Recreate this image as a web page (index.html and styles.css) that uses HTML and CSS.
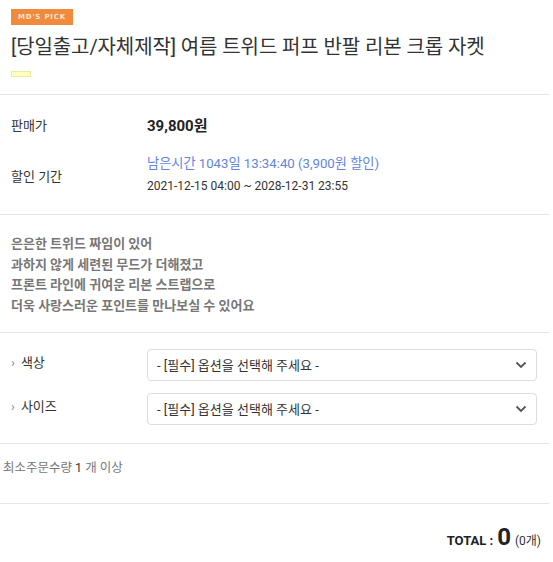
FILE: index.html
```html
<!DOCTYPE html>
<html lang="ko">
<head>
<meta charset="utf-8">
<link rel="stylesheet" href="styles.css">
</head>
<body>
<div class="page">
  <section class="head">
    <span class="badge">MD'S PICK</span>
    <h1 class="title">[당일출고/자체제작] 여름 트위드 퍼프 반팔 리본 크롭 자켓</h1>
    <span class="swatch"></span>
  </section>
  <section class="info">
    <div class="row price-row">
      <div class="label">판매가</div>
      <div class="value price">39,800원</div>
    </div>
    <div class="row sale-row">
      <div class="label">할인 기간</div>
      <div class="value">
        <div class="remain">남은시간 1043일 13:34:40 (3,900원 할인)</div>
        <div class="period">2021-12-15 04:00 ~ 2028-12-31 23:55</div>
      </div>
    </div>
  </section>
  <section class="desc">
    <p>은은한 트위드 짜임이 있어</p>
    <p>과하지 않게 세련된 무드가 더해졌고</p>
    <p>프론트 라인에 귀여운 리본 스트랩으로</p>
    <p>더욱 사랑스러운 포인트를 만나보실 수 있어요</p>
  </section>
  <section class="options">
    <div class="opt">
      <div class="opt-label"><span class="chev">›</span>색상</div>
      <div class="select">
        <span>- [필수] 옵션을 선택해 주세요 -</span>
        <svg class="arrow" width="12" height="8" viewBox="0 0 12 8"><path d="M1.5 1.5 L6 6 L10.5 1.5" fill="none" stroke="#555" stroke-width="1.8"/></svg>
      </div>
    </div>
    <div class="opt">
      <div class="opt-label"><span class="chev">›</span>사이즈</div>
      <div class="select">
        <span>- [필수] 옵션을 선택해 주세요 -</span>
        <svg class="arrow" width="12" height="8" viewBox="0 0 12 8"><path d="M1.5 1.5 L6 6 L10.5 1.5" fill="none" stroke="#555" stroke-width="1.8"/></svg>
      </div>
    </div>
  </section>
  <section class="minqty">
    최소주문수량 <b>1</b> 개 이상
  </section>
  <section class="total">
    <span class="t-label">TOTAL :</span> <span class="t-num">0</span> <span class="t-cnt">(0개)</span>
  </section>
</div>
</body>
</html>
```

FILE: styles.css
```css
* { box-sizing: border-box; }
html, body { margin: 0; padding: 0; background: #fff; }
body {
  font-family: Roboto, "Noto Sans CJK KR", sans-serif;
  color: #333;
  width: 549px;
}
.page { display: flex; flex-direction: column; }

.head {
  padding: 9px 11px 17px;
  border-bottom: 1px solid #e5e5e5;
  display: flex;
  flex-direction: column;
  align-items: flex-start;
}
.badge {
  background: #f08a3c;
  color: #fde6d2;
  font-family: "DejaVu Sans", sans-serif;
  font-weight: bold;
  font-size: 7px;
  letter-spacing: 0.8px;
  height: 16px;
  line-height: 16px;
  padding: 0 7px;
}
.title {
  margin: 8px 0 0;
  font-size: 20px;
  font-weight: 400;
  line-height: 28px;
  color: #333;
  letter-spacing: -0.1px;
}
.swatch {
  margin-top: 10px;
  width: 20px;
  height: 6px;
  background: #ffffc4;
  border: 1px solid #ecec9c;
}

.info {
  padding: 13px 11px 17px;
  border-bottom: 1px solid #e5e5e5;
}
.row { display: flex; align-items: center; }
.label { width: 136px; font-size: 13px; color: #333; }
.price-row { height: 32px; }
.price { font-size: 15px; font-weight: 700; color: #222; }
.sale-row { margin-top: 13px; }
.remain { font-size: 13.2px; color: #5f86e0; line-height: 22px; }
.period { font-size: 12px; color: #333; line-height: 22px; }

.desc {
  padding: 19px 11px 15px;
  border-bottom: 1px solid #e5e5e5;
}
.desc p {
  margin: 0;
  font-size: 13px;
  line-height: 20.7px;
  color: #777;
  font-weight: 700;
}

.options {
  padding: 16px 12px 18px 11px;
  border-bottom: 1px solid #e5e5e5;
  display: flex;
  flex-direction: column;
  gap: 12px;
}
.opt { display: flex; align-items: flex-start; }
.opt-label {
  width: 136px;
  font-size: 13px;
  color: #333;
  padding-top: 3px;
}
.chev { color: #888; margin-right: 6px; font-size: 13px; }
.select {
  flex: 1;
  height: 32px;
  border: 1px solid #ddd;
  border-radius: 4px;
  display: flex;
  align-items: center;
  justify-content: space-between;
  padding: 0 9px 0 9px;
  font-size: 13px;
  color: #333;
}

.minqty {
  padding: 13px 3px 0;
  font-size: 12.5px;
  color: #777;
  border-bottom: 1px solid #e5e5e5;
  height: 60px;
}
.minqty b { font-weight: 400; color: #333; }

.total {
  padding: 19px 8px 0 0;
  text-align: right;
  color: #222;
}
.t-label { font-size: 13px; font-weight: 700; }
.t-num { font-size: 24px; font-weight: 700; }
.t-cnt { font-size: 12px; color: #333; }
```
